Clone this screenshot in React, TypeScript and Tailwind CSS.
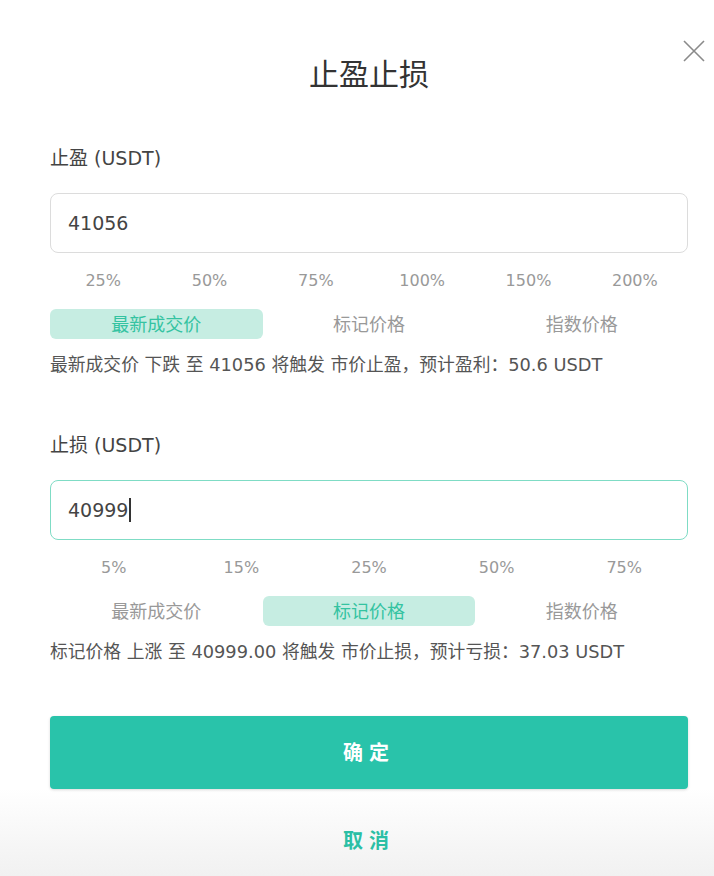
import React from 'react';

const font = { fontFamily: '"DejaVu Sans", "Noto Sans CJK SC", sans-serif' };

function Section({
  label,
  value,
  focused,
  percents,
  active,
  desc,
}: {
  label: string;
  value: string;
  focused?: boolean;
  percents: string[];
  active: number;
  desc: string;
}) {
  const tabs = ['最新成交价', '标记价格', '指数价格'];
  return (
    <div>
      <div className="text-[19px] leading-6 text-[#444]">{label}</div>
      <div
        className={
          focused
            ? 'mt-[23px] h-[60px] rounded-lg border border-[#7fdcc5] flex items-center px-[17px]'
            : 'mt-[23px] h-[60px] rounded-lg border border-[#dcdcdc] flex items-center px-[17px]'
        }
      >
        <span className="text-[19px] text-[#444]">{value}</span>
        {focused && <span className="ml-[1px] w-[1.5px] h-[24px] bg-[#333]" />}
      </div>
      <div className={percents.length === 6 ? 'mt-4 grid grid-cols-6' : 'mt-4 grid grid-cols-5'}>
        {percents.map((p) => (
          <div key={p} className="text-center text-[16px] leading-6 text-[#999]">
            {p}
          </div>
        ))}
      </div>
      <div className="mt-4 grid grid-cols-3">
        {tabs.map((t, i) => (
          <div
            key={t}
            className={
              i === active
                ? 'h-[30px] rounded-md bg-[#c6ede2] text-[#34c3a1] text-[18px] flex items-center justify-center'
                : 'h-[30px] text-[#999] text-[18px] flex items-center justify-center'
            }
          >
            {t}
          </div>
        ))}
      </div>
      <div className="mt-[14px] text-[17.8px] leading-6 text-[#555]">{desc}</div>
    </div>
  );
}

export default function App() {
  return (
    <div
      style={font}
      className="relative w-[714px] h-[876px] bg-linear-to-b from-white from-[90%] to-[#f1f1f1] pl-[50px] pr-[26px] pt-[55px]"
    >
      <button className="absolute right-[9px] top-[40px] w-[22px] h-[22px]">
        <svg viewBox="0 0 22 22" className="w-full h-full" fill="none" stroke="#8a8a8a" strokeWidth="1.6">
          <path d="M1 1L21 21M21 1L1 21" />
        </svg>
      </button>
      <h1 className="text-center text-[30px] leading-10 text-[#333]">止盈止损</h1>

      <div className="mt-[51px]">
        <Section
          label="止盈 (USDT)"
          value="41056"
          percents={['25%', '50%', '75%', '100%', '150%', '200%']}
          active={0}
          desc="最新成交价 下跌 至 41056 将触发 市价止盈，预计盈利：50.6 USDT"
        />
      </div>
      <div className="mt-[56px]">
        <Section
          label="止损 (USDT)"
          value="40999"
          focused
          percents={['5%', '15%', '25%', '50%', '75%']}
          active={1}
          desc="标记价格 上涨 至 40999.00 将触发 市价止损，预计亏损：37.03 USDT"
        />
      </div>

      <button className="mt-[52px] w-full h-[73px] rounded bg-[#29c3aa] shadow-[0_1px_3px_rgba(0,0,0,0.15)] text-white text-[20px] font-bold tracking-[6px] flex items-center justify-center">
        确定
      </button>
      <div className="mt-10 text-center text-[20px] leading-6 font-bold text-[#2bbfa5] tracking-[6px]">取消</div>
    </div>
  );
}
